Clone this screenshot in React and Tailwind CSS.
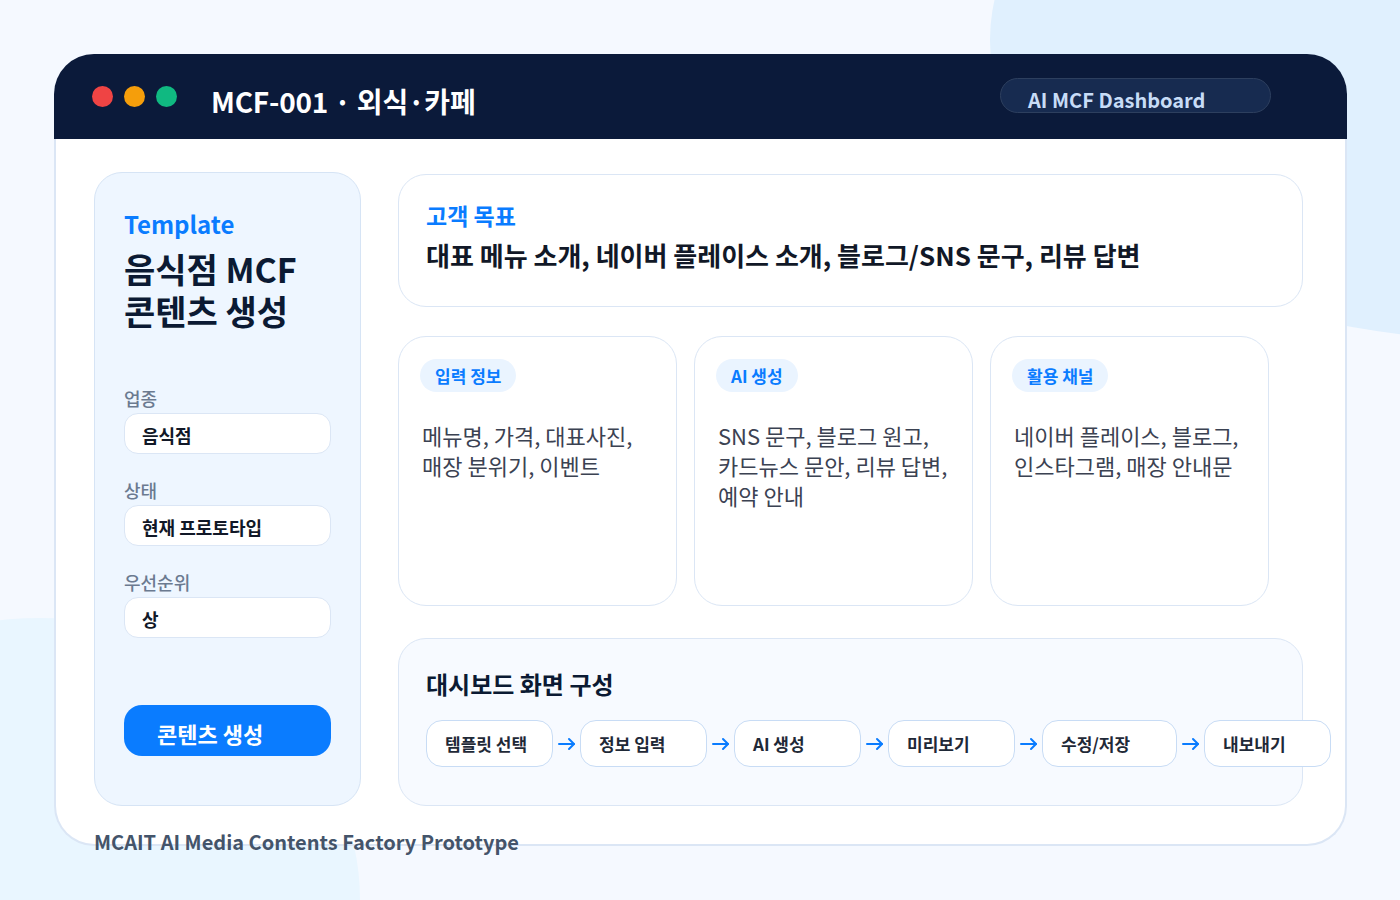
const fields = [
  { label: '업종', value: '음식점' },
  { label: '상태', value: '현재 프로토타입' },
  { label: '우선순위', value: '상' },
];

const infoCards = [
  { tag: '입력 정보', lines: ['메뉴명, 가격, 대표사진,', '매장 분위기, 이벤트'] },
  { tag: 'AI 생성', lines: ['SNS 문구, 블로그 원고,', '카드뉴스 문안, 리뷰 답변,', '예약 안내'] },
  { tag: '활용 채널', lines: ['네이버 플레이스, 블로그,', '인스타그램, 매장 안내문'] },
];

const steps = [
  { label: '템플릿 선택', w: 'w-[127px]' },
  { label: '정보 입력', w: 'w-[127px]' },
  { label: 'AI 생성', w: 'w-[127px]' },
  { label: '미리보기', w: 'w-[127px]' },
  { label: '수정/저장', w: 'w-[135px]' },
  { label: '내보내기', w: 'w-[127px]' },
];

function Sidebar() {
  return (
    <aside className="w-[267px] h-[634px] shrink-0 rounded-[28px] border border-[#d6e4f5] bg-[#eef6ff] pl-[29px] pr-[29px] pt-[33px] flex flex-col">
      <p className="text-[24px] leading-[36px] font-bold text-[#0a7cff]">Template</p>
      <h2 className="mt-[6px] text-[34px] leading-[42px] font-bold text-[#0b1a33]">
        음식점 MCF
        <br />
        콘텐츠 생성
      </h2>

      <div className="mt-[53px] flex flex-col gap-[23px]">
        {fields.map((f) => (
          <div key={f.label}>
            <p className="text-[18px] leading-[26px] font-medium text-[#6b7a90]">{f.label}</p>
            <div className="mt-[2px] h-[41px] w-[207px] rounded-[14px] border border-[#dbe6f5] bg-white flex items-center pl-[17px] pt-[3px] text-[18px] font-bold text-[#111827]">
              {f.value}
            </div>
          </div>
        ))}
      </div>

      <button className="mt-[67px] h-[51px] w-[207px] rounded-[18px] bg-[#0a7cff] text-left pl-[33px] pt-[6px] text-[22px] font-bold text-white">
        콘텐츠 생성
      </button>
    </aside>
  );
}

function Arrow() {
  return (
    <svg className="w-[19px] h-[14px] shrink-0" viewBox="0 0 19 14" fill="none" stroke="#0a7cff" strokeWidth="2" strokeLinecap="round" strokeLinejoin="round">
      <path d="M2 7h15" />
      <path d="M12 2l5 5-5 5" />
    </svg>
  );
}

function MainColumn() {
  return (
    <div className="w-[905px] shrink-0 flex flex-col pt-[2px]">
      <section className="h-[133px] rounded-[28px] border border-[#dbe6f5] bg-white pl-[27px] pt-[24px]">
        <p className="text-[23px] leading-[32px] font-bold text-[#0a7cff]">고객 목표</p>
        <p className="mt-[6px] text-[26px] leading-[36px] font-bold text-[#111827]">
          대표 메뉴 소개, 네이버 플레이스 소개, 블로그/SNS 문구, 리뷰 답변
        </p>
      </section>

      <div className="mt-[29px] flex gap-[17px]">
        {infoCards.map((c) => (
          <section key={c.tag} className="w-[279px] h-[270px] rounded-[28px] border border-[#dbe6f5] bg-white pl-[21px] pt-[22px]">
            <span className="inline-flex h-[33px] items-center rounded-full bg-[#eaf4ff] px-[15px] pt-[1px] text-[17px] font-bold text-[#0a7cff]">
              {c.tag}
            </span>
            <div className="mt-[28px] pl-[2px] text-[22px] leading-[30px] text-[#3b4252]">
              {c.lines.map((l) => (
                <p key={l}>{l}</p>
              ))}
            </div>
          </section>
        ))}
      </div>

      <section className="mt-[32px] h-[168px] rounded-[28px] border border-[#dbe6f5] bg-[#f7faff] pl-[27px] pt-[28px]">
        <h3 className="text-[24px] leading-[34px] font-bold text-[#0b1a33]">대시보드 화면 구성</h3>
        <div className="mt-[19px] flex items-center gap-[4px]">
          {steps.map((s, i) => (
            <div key={s.label} className="flex items-center gap-[4px]">
              {i > 0 && <Arrow />}
              <div className={`${s.w} h-[47px] shrink-0 rounded-[16px] border border-[#c8dcf5] bg-white flex items-center pl-[18px] pt-[1px] text-[17px] font-bold text-[#1f2937]`}>
                {s.label}
              </div>
            </div>
          ))}
        </div>
      </section>
    </div>
  );
}

export default function App() {
  return (
    <div className="relative w-[1400px] h-[900px] overflow-hidden bg-[#f5f9ff] font-['Noto_Sans_CJK_KR','Noto_Sans',sans-serif]">
      {/* background blobs */}
      <div className="absolute left-[990px] top-[-260px] w-[1020px] h-[600px] rounded-[50%] bg-[#e0f0fe]" />
      <div className="absolute left-[-280px] top-[618px] w-[640px] h-[564px] rounded-[50%] bg-[#e9f6ff]" />

      <div className="relative pt-[54px] pl-[54px]">
        <div className="w-[1293px]">
          <header className="h-[85px] rounded-t-[40px] bg-[#0b1a3a] flex items-center pl-[38px] pr-[76px]">
            <div className="flex gap-[11px]">
              <span className="w-[21px] h-[21px] rounded-full bg-[#ef4444]" />
              <span className="w-[21px] h-[21px] rounded-full bg-[#f59e0b]" />
              <span className="w-[21px] h-[21px] rounded-full bg-[#10b981]" />
            </div>
            <h1 className="ml-[34px] mt-[8px] text-[28px] font-bold text-white tracking-[-0.2px]">
              MCF-001 · 외식·카페
            </h1>
            <div className="ml-auto h-[35px] w-[271px] mt-[-2px] rounded-full border border-[#2d3f5e] bg-[#172b50] flex items-center pl-[27px] pt-[8px] text-[20px] font-bold text-[#c7dcf7]">
              AI MCF Dashboard
            </div>
          </header>

          <div className="h-[707px] rounded-b-[40px] border-2 border-t-0 border-[#dbe6f5] bg-white pl-[38px] pt-[33px] flex gap-[37px]">
            <Sidebar />
            <MainColumn />
          </div>
        </div>

        <p className="relative -mt-[18px] pl-[40px] text-[20px] leading-[28px] font-bold text-[#44546a]">
          MCAIT AI Media Contents Factory Prototype
        </p>
      </div>
    </div>
  );
}
